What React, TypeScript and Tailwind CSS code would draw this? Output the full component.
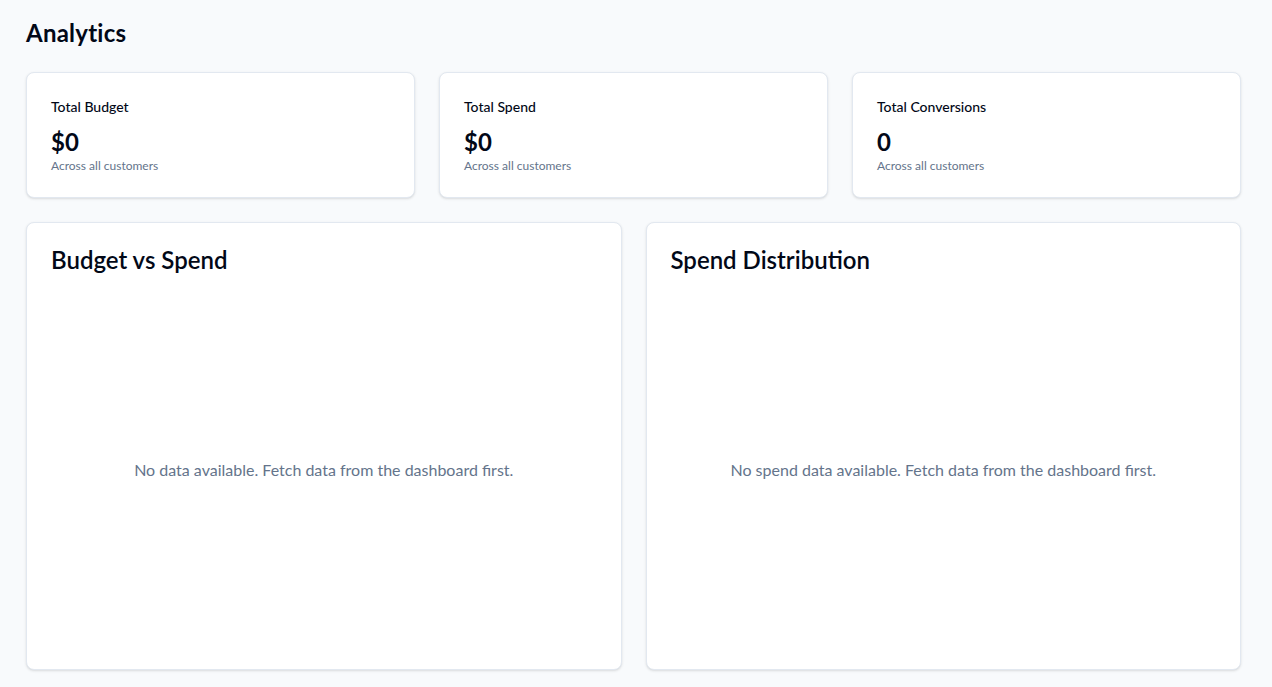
import React from "react";

function StatCard({ title, value }: { title: string; value: string }) {
  return (
    <div className="rounded-lg border border-[#e2e8f0] bg-white shadow-sm p-6 h-[126px]">
      <div className="text-sm font-medium leading-5 text-[#020817]">{title}</div>
      <div className="mt-[9px] text-2xl font-bold leading-8 text-[#020817]">{value}</div>
      <div className="text-xs leading-4 text-[#64748b]">Across all customers</div>
    </div>
  );
}

function ChartCard({ title, message }: { title: string; message: string }) {
  return (
    <div className="rounded-lg border border-[#e2e8f0] bg-white shadow-sm h-[448px] flex flex-col">
      <div className="px-6 pt-[21px] pb-6">
        <h3 className="text-2xl font-semibold leading-8 text-[#020817]">{title}</h3>
      </div>
      <div className="flex-1 px-6 pb-[30px] flex items-center justify-center">
        <p className="text-base text-[#64748b]">{message}</p>
      </div>
    </div>
  );
}

export default function App() {
  return (
    <div
      className="min-h-screen bg-[#f8fafc] pl-[26px] pr-[31px] pt-[17px]"
      style={{ fontFamily: 'Lato, "Noto Sans", sans-serif' }}
    >
      <h1 className="text-2xl font-bold leading-8 tracking-[0.01em] text-[#020817]">Analytics</h1>
      <div className="mt-[23px] grid grid-cols-3 gap-6">
        <StatCard title="Total Budget" value="$0" />
        <StatCard title="Total Spend" value="$0" />
        <StatCard title="Total Conversions" value="0" />
      </div>
      <div className="mt-6 grid grid-cols-2 gap-6">
        <ChartCard title="Budget vs Spend" message="No data available. Fetch data from the dashboard first." />
        <ChartCard title="Spend Distribution" message="No spend data available. Fetch data from the dashboard first." />
      </div>
    </div>
  );
}
